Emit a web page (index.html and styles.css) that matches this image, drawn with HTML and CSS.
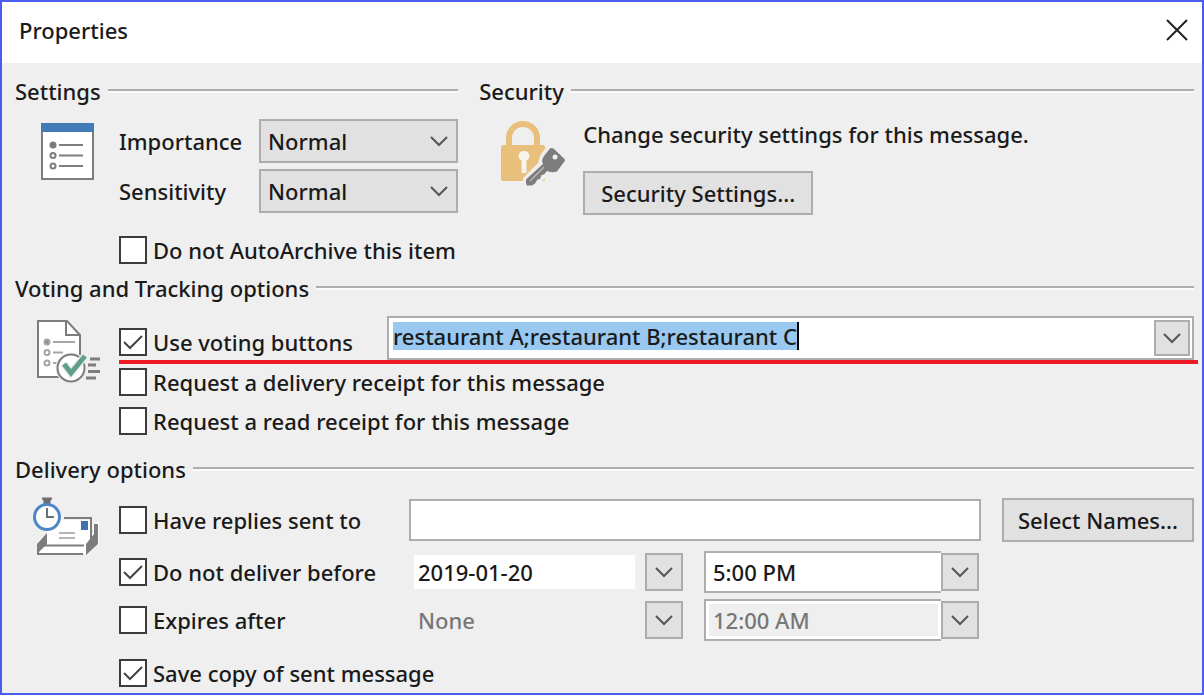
FILE: index.html
```html
<!DOCTYPE html>
<html lang="en">
<head>
    <meta charset="UTF-8">
    <meta name="viewport" content="width=device-width, initial-scale=1.0">
    <title>Properties</title>
    <link rel="stylesheet" href="styles.css">
</head>
<body>
    <form class="dialog">
        <header class="titlebar">
            <h1>Properties</h1>
            <button type="button" class="close" aria-label="Close">
                <svg width="22" height="22" viewBox="0 0 22 22"><path d="M1 1L21 21M21 1L1 21"/></svg>
            </button>
        </header>

        <main class="content">
            <div class="columns">
                <section class="group">
                    <h2>Settings</h2>
                    <div class="group-body">
                        <svg class="icon" width="72" height="72" viewBox="0 0 72 72">
                            <rect x="9" y="6" width="51" height="54" fill="#fff" stroke="#7d7d7d" stroke-width="2"/>
                            <rect x="8" y="4" width="53" height="9" fill="#437bb8"/>
                            <circle cx="20" cy="26" r="3" fill="#777"/>
                            <g fill="none" stroke="#7d7d7d" stroke-width="2">
                                <circle cx="20" cy="26" r="2.5"/>
                                <circle cx="20" cy="36.5" r="2.5"/>
                                <circle cx="20" cy="47" r="2.5"/>
                                <path d="M26 26H50M26 36.5H50M26 47H50"/>
                            </g>
                        </svg>
                        <div class="fields">
                            <div class="select-row">
                                <label for="importance">Importance</label>
                                <select id="importance">
                                    <option>Normal</option>
                                </select>
                            </div>
                            <div class="select-row">
                                <label for="sensitivity">Sensitivity</label>
                                <select id="sensitivity">
                                    <option>Normal</option>
                                </select>
                            </div>
                            <label class="check archive"><input type="checkbox">Do not AutoArchive this item</label>
                        </div>
                    </div>
                </section>

                <section class="group">
                    <h2>Security</h2>
                    <div class="group-body">
                        <svg class="icon" width="72" height="72" viewBox="0 0 72 72">
                            <path d="M12 31V19a14 14 0 0 1 28 0v12" fill="none" stroke="#e8c07c" stroke-width="6"/>
                            <rect x="4" y="26" width="44" height="36" rx="2" fill="#e8c07c"/>
                            <path d="M27 32a5 5 0 0 1 2.5 9.5V54h-5V41.5A5 5 0 0 1 27 32z" fill="#f7f4ee"/>
                            <path d="M51 25L71 41L63 55L53 54L38 69L26 67V59L41 44L43 37z" fill="#efefef"/>
                            <path d="M53 29.5Q55 28.5 57 30L67 39.5Q69 41.5 67 43L60 52.5Q54 54 50 52L47 55.5L44.5 56L43 60L40.5 60.5L38 64.5L35 66.5H30Q28 63 29.5 60L46 45Q44 41 47 37z" fill="#7c7c7c"/>
                            <circle cx="58" cy="38" r="2.5" fill="#efefef"/>
                            <path d="M33 62L47 48" stroke="#b8b8b8" stroke-width="1.5"/>
                        </svg>
                        <div class="fields">
                            <p class="note">Change security settings for this message.</p>
                            <button type="button" class="btn security-btn">Security Settings...</button>
                        </div>
                    </div>
                </section>
            </div>

            <section class="group voting">
                <h2>Voting and Tracking options</h2>
                <div class="group-body">
                    <svg class="icon" width="72" height="72" viewBox="0 0 72 72">
                        <path d="M5 5H34L47 19V61H5z" fill="#fff" stroke="#7d7d7d" stroke-width="2"/>
                        <path d="M33 5V19H47" fill="none" stroke="#7d7d7d" stroke-width="2"/>
                        <circle cx="14" cy="26" r="3" fill="#8a8a8a"/>
                        <g fill="none" stroke="#a5a5a5" stroke-width="2">
                            <circle cx="14" cy="26" r="2.5"/>
                            <circle cx="14" cy="36.5" r="2.5"/>
                            <circle cx="14" cy="47" r="2.5"/>
                            <path d="M20 26H42M20 36.5H30M20 47H24"/>
                        </g>
                        <circle cx="38" cy="52" r="15.5" fill="#efefef"/>
                        <circle cx="38" cy="52" r="13.5" fill="#fff" stroke="#7d7d7d" stroke-width="2"/>
                        <path d="M31 48L38 57L52 40" fill="none" stroke="#efefef" stroke-width="8"/>
                        <path d="M31 48L38 57L52 40" fill="none" stroke="#5fa088" stroke-width="5"/>
                        <path d="M57 43H67M55 49H63M55 55.5H67M53 62H63" stroke="#7d7d7d" stroke-width="3"/>
                    </svg>
                    <div class="fields">
                        <div class="voting-row">
                            <label class="check" for="use-voting"><input type="checkbox" id="use-voting" checked>Use voting buttons</label>
                            <div class="combo">
                                <input type="text" class="combo-text" aria-label="Voting buttons" value="restaurant A;restaurant B;restaurant C">
                                <button type="button" class="drop" aria-label="Show choices"></button>
                            </div>
                        </div>
                        <label class="check"><input type="checkbox">Request a delivery receipt for this message</label>
                        <label class="check"><input type="checkbox">Request a read receipt for this message</label>
                    </div>
                </div>
            </section>

            <section class="group delivery">
                <h2>Delivery options</h2>
                <div class="group-body">
                    <svg class="icon" width="72" height="72" viewBox="0 0 72 72">
                        <path d="M5 54V43L14 36L60 36V26L66 24V46L54 56H5z" fill="#fff"/>
                        <path d="M4 46L14 35V46L6 54V57H4z" fill="#7d7d7d"/>
                        <path d="M31 20H58V46" fill="none" stroke="#7d7d7d" stroke-width="2"/>
                        <path d="M14 22H57V45L53 48H14z" fill="#fff"/>
                        <rect x="48" y="23" width="7" height="9" fill="#3f72b5"/>
                        <path d="M26 35H42M26 40H42" stroke="#b4b4b4" stroke-width="2"/>
                        <path d="M6 47.5H51M5 56H50" stroke="#7d7d7d" stroke-width="2"/>
                        <path d="M53 46L61 36V26H65V46L53 57z" fill="#7d7d7d"/>
                        <path d="M9 0H19L17 3V7H11V3z" fill="#6f6f6f" stroke="#6f6f6f"/>
                        <circle cx="14" cy="19" r="12.5" fill="#fff" stroke="#4e86c6" stroke-width="3"/>
                        <path d="M14 10V19H21" fill="none" stroke="#6f6f6f" stroke-width="2"/>
                    </svg>
                    <div class="fields">
                        <div class="delivery-row replies">
                            <label class="check"><input type="checkbox">Have replies sent to</label>
                            <input type="text" class="reply-to" aria-label="Reply address">
                            <button type="button" class="btn">Select Names...</button>
                        </div>
                        <div class="delivery-row">
                            <label class="check"><input type="checkbox" checked>Do not deliver before</label>
                            <div class="date-time">
                                <input type="text" class="date" aria-label="Deliver date" value="2019-01-20">
                                <button type="button" class="drop" aria-label="Pick deliver date"></button>
                                <input type="text" class="time" aria-label="Deliver time" value="5:00 PM">
                                <button type="button" class="drop" aria-label="Pick deliver time"></button>
                            </div>
                        </div>
                        <div class="delivery-row">
                            <label class="check"><input type="checkbox">Expires after</label>
                            <div class="date-time">
                                <input type="text" class="date" aria-label="Expiry date" value="None" disabled>
                                <button type="button" class="drop" aria-label="Pick expiry date"></button>
                                <input type="text" class="time" aria-label="Expiry time" value="12:00 AM" disabled>
                                <button type="button" class="drop" aria-label="Pick expiry time"></button>
                            </div>
                        </div>
                        <label class="check save"><input type="checkbox" checked>Save copy of sent message</label>
                    </div>
                </div>
            </section>
        </main>
    </form>
</body>
</html>
```
FILE: styles.css
```css
* {
    box-sizing: border-box;
}
body {
    margin: 0;
    background-color: #efefef;
    color: #1a1a1a;
}
body, input, select, button {
    font-family: "Noto Sans", "Open Sans", sans-serif;
    font-size: 22px;
    font-weight: 500;
    line-height: 30px;
}
h1, h2, p {
    margin: 0;
    font-size: 22px;
    font-weight: 500;
}
.dialog {
    min-height: 100vh;
    border: 2px solid #4a5df0;
}

/* title bar */
.titlebar {
    display: flex;
    justify-content: space-between;
    align-items: center;
    height: 61px;
    padding: 0 14px 6px 17px;
    background: #fff;
}
.close {
    display: flex;
    padding: 0;
    border: none;
    background: none;
}
.close path {
    stroke: #222;
    stroke-width: 2;
}

/* groups */
.content {
    padding: 12px 8px 0 13px;
}
.columns {
    display: grid;
    grid-template-columns: 31fr 50fr;
    gap: 21px;
}
.group h2 {
    display: flex;
    align-items: center;
    gap: 7px;
    height: 32px;
}
.group h2::after {
    content: "";
    flex: 1;
    height: 2px;
    background: #adadad;
    border-bottom: 2px solid #fafafa;
}
.group-body {
    display: grid;
    grid-template-columns: 104px minmax(0, 1fr);
    padding-top: 12px;
}
.icon {
    margin-left: 18px;
    overflow: visible;
}

/* checkboxes */
.check {
    display: flex;
    align-items: center;
    gap: 6px;
    height: 39px;
    white-space: nowrap;
}
.check input {
    appearance: none;
    width: 28px;
    height: 28px;
    margin: 0;
    border: 2px solid #3c3c3c;
    background: #fff;
}
.check input:checked {
    background: #fff url("data:image/svg+xml,%3Csvg xmlns='http://www.w3.org/2000/svg' width='24' height='24'%3E%3Cpath d='M3 12l6 6L21 6' fill='none' stroke='%23444' stroke-width='2'/%3E%3C/svg%3E") center no-repeat;
}

/* selects and buttons */
.btn, .drop, select {
    border: 2px solid #adadad;
    border-radius: 0;
    background-color: #e1e1e1;
    color: #1a1a1a;
}
.btn {
    height: 44px;
    padding: 0;
}
.drop, select {
    background-image: url("data:image/svg+xml,%3Csvg xmlns='http://www.w3.org/2000/svg' width='20' height='12'%3E%3Cpath d='M2 2l8 8 8-8' fill='none' stroke='%23555' stroke-width='2'/%3E%3C/svg%3E");
    background-position: center;
    background-repeat: no-repeat;
}
.drop {
    flex: none;
    width: 38px;
    height: 38px;
    padding: 0;
}
select {
    appearance: none;
    width: 100%;
    height: 44px;
    padding: 0 7px;
    background-position: right 7px center;
}
input[type="text"] {
    min-width: 0;
    border: none;
    border-radius: 0;
    background: #fff;
    color: #1a1a1a;
}
.select-row {
    display: grid;
    grid-template-columns: 140px 1fr;
    align-items: center;
    margin-bottom: 6px;
}
.archive {
    margin-top: 17px;
}
.security-btn {
    width: 230px;
    margin-top: 22px;
}

/* voting */
.voting {
    margin-top: 3px;
}
.voting-row {
    position: relative;
    display: grid;
    grid-template-columns: 268px 1fr;
    align-items: end;
    margin-bottom: 2px;
}
.voting-row .check {
    height: 36px;
}
.voting-row::after {
    content: "";
    position: absolute;
    top: 100%;
    left: 0;
    right: -4px;
    height: 4px;
    background: #ed1c24;
}
.combo {
    display: flex;
    align-items: center;
    justify-content: space-between;
    height: 44px;
    padding: 0 2px 0 4px;
    border: 2px solid #adadad;
    background: #fff;
}
.combo input.combo-text {
    field-sizing: content;
    height: 28px;
    padding: 0;
    margin-bottom: 4px;
    border-right: 2px solid #000;
    background: #99c9f1;
}
.combo .drop {
    width: 36px;
    height: 36px;
}

/* delivery */
.delivery {
    margin-top: 13px;
}
.delivery .group-body {
    padding-top: 13px;
}
.delivery-row {
    display: grid;
    grid-template-columns: 290px minmax(0, 1fr) 192px;
    align-items: center;
    height: 44px;
    margin-bottom: 4px;
}
.replies {
    margin-bottom: 8px;
}
.save {
    margin-top: 11px;
}
input.reply-to {
    height: 42px;
    margin-right: 21px;
    padding: 0 6px;
    border: 2px solid #adadad;
}
.date-time {
    display: flex;
    align-items: center;
    padding-left: 5px;
    margin-right: 23px;
}
input.date {
    flex: 0 1 221px;
    height: 34px;
    margin-right: 10px;
    padding: 0 4px;
}
input.time {
    flex: 1;
    height: 42px;
    margin-left: 21px;
    padding: 0 7px;
    border: 2px solid #adadad;
    border-right: none;
}
input.date:disabled {
    background: none;
    color: #777;
}
input.time:disabled {
    color: #777;
    background: #efefef;
    box-shadow: inset 0 0 0 3px #fff;
}
```
